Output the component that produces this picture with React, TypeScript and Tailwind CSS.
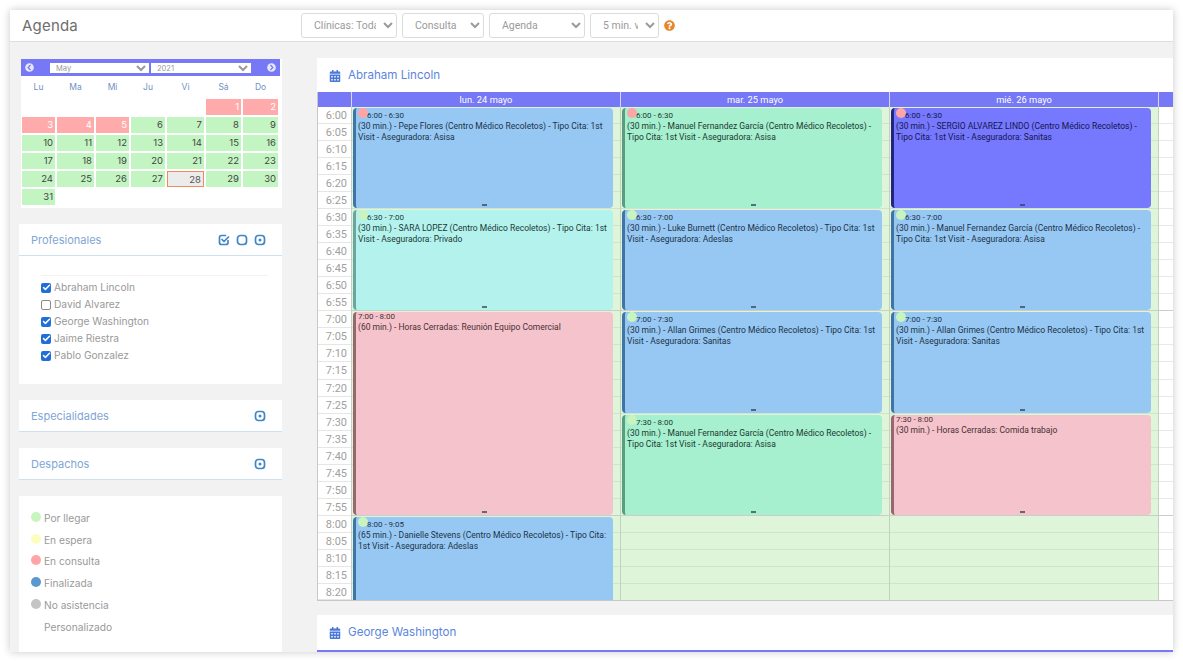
import { Check } from "lucide-react";
import { FaCalendarAlt, FaChevronCircleLeft, FaChevronCircleRight, FaQuestionCircle } from "react-icons/fa";

type Appt = {
  start: number;
  span: number;
  time: string;
  text: string;
  bg: string;
  edge: string;
  ink: string;
  dot?: string;
  open?: boolean;
};

const blue = { bg: "bg-[#97c8f4]", edge: "border-l-[#3f74a6]", ink: "text-[#1b3347]" };
const green = { bg: "bg-[#a6efcf]", edge: "border-l-[#5a9c80]", ink: "text-[#1b3a30]" };
const teal = { bg: "bg-[#b4f3ed]", edge: "border-l-[#6aa5a0]", ink: "text-[#1b3a38]" };
const purple = { bg: "bg-[#7678fe]", edge: "border-l-[#23247f]", ink: "text-[#14164f]" };
const pink = { bg: "bg-[#f4c3cb]", edge: "border-l-[#96676f]", ink: "text-[#4a2f34]" };

const RED = "bg-[#ffa5a5]";
const LIME = "bg-[#c8f4c0]";

const days: { title: string; appts: Appt[] }[] = [
  {
    title: "lun. 24 mayo",
    appts: [
      { start: 1, span: 6, time: "6:00 - 6:30", text: "(30 min.) - Pepe Flores (Centro Médico Recoletos) - Tipo Cita: 1st Visit - Aseguradora: Asisa", dot: RED, ...blue },
      { start: 7, span: 6, time: "6:30 - 7:00", text: "(30 min.) - SARA LOPEZ (Centro Médico Recoletos) - Tipo Cita: 1st Visit - Aseguradora: Privado", dot: LIME, ...teal },
      { start: 13, span: 12, time: "7:00 - 8:00", text: "(60 min.) - Horas Cerradas: Reunión Equipo Comercial", ...pink },
      { start: 25, span: 5, time: "8:00 - 9:05", text: "(65 min.) - Danielle Stevens (Centro Médico Recoletos) - Tipo Cita: 1st Visit - Aseguradora: Adeslas", dot: LIME, open: true, ...blue },
    ],
  },
  {
    title: "mar. 25 mayo",
    appts: [
      { start: 1, span: 6, time: "6:00 - 6:30", text: "(30 min.) - Manuel Fernandez García (Centro Médico Recoletos) - Tipo Cita: 1st Visit - Aseguradora: Asisa", dot: RED, ...green },
      { start: 7, span: 6, time: "6:30 - 7:00", text: "(30 min.) - Luke Burnett (Centro Médico Recoletos) - Tipo Cita: 1st Visit - Aseguradora: Adeslas", dot: LIME, ...blue },
      { start: 13, span: 6, time: "7:00 - 7:30", text: "(30 min.) - Allan Grimes (Centro Médico Recoletos) - Tipo Cita: 1st Visit - Aseguradora: Sanitas", dot: LIME, ...blue },
      { start: 19, span: 6, time: "7:30 - 8:00", text: "(30 min.) - Manuel Fernandez García (Centro Médico Recoletos) - Tipo Cita: 1st Visit - Aseguradora: Asisa", dot: LIME, ...green },
    ],
  },
  {
    title: "mié. 26 mayo",
    appts: [
      { start: 1, span: 6, time: "6:00 - 6:30", text: "(30 min.) - SERGIO ALVAREZ LINDO (Centro Médico Recoletos) - Tipo Cita: 1st Visit - Aseguradora: Sanitas", dot: RED, ...purple },
      { start: 7, span: 6, time: "6:30 - 7:00", text: "(30 min.) - Manuel Fernandez García (Centro Médico Recoletos) - Tipo Cita: 1st Visit - Aseguradora: Asisa", dot: LIME, ...blue },
      { start: 13, span: 6, time: "7:00 - 7:30", text: "(30 min.) - Allan Grimes (Centro Médico Recoletos) - Tipo Cita: 1st Visit - Aseguradora: Sanitas", dot: LIME, ...blue },
      { start: 19, span: 6, time: "7:30 - 8:00", text: "(30 min.) - Horas Cerradas: Comida trabajo", ...pink },
    ],
  },
];

const times: string[] = [];
for (let h = 6; h <= 8; h++) {
  for (let m = 0; m < 60; m += 5) {
    if (h === 8 && m > 20) break;
    times.push(`${h}:${m === 0 ? "00" : m.toString().padStart(2, "0")}`);
  }
}

const weekDays = ["Lu", "Ma", "Mi", "Ju", "Vi", "Sá", "Do"];
const closed = [1, 2, 3, 4, 5];

const Slots = ({ tint }: { tint: boolean }) => (
  <>
    {times.map((t, i) => (
      <div
        key={t}
        style={{ gridRow: i + 1, gridColumn: 1 }}
        className={
          (tint ? "bg-[#dff5d9] " : "bg-white ") +
          (i === 11 || i === 23
            ? "border-b border-b-[#c9cfc7]"
            : i === 28
            ? ""
            : tint
            ? "border-b border-b-[#d0e3cb]"
            : "border-b border-b-[#e8e8e8]")
        }
      />
    ))}
  </>
);

const Event = ({ a }: { a: Appt }) => (
  <div
    style={{ gridRow: `${a.start} / span ${a.span}`, gridColumn: 1 }}
    className={`z-10 ml-[1px] mr-[7px] mt-[1px] flex flex-col overflow-hidden border-l-[3px] pl-[2px] pr-[6px] ${a.open ? "rounded-t-[4px]" : "mb-[1px] rounded-[4px]"} ${a.bg} ${a.edge} ${a.ink}`}
  >
    {a.dot ? (
      <div className="flex h-[13px]">
        <span className={`h-[10px] w-[10px] shrink-0 rounded-full ${a.dot}`} />
        <span className="ml-[-1px] pt-[3px] text-[8px] leading-[10px]">{a.time}</span>
      </div>
    ) : (
      <div className="h-[10px] text-[8px] leading-[10px]">{a.time}</div>
    )}
    <div className="text-[8.5px] leading-[11px]">{a.text}</div>
    {!a.open && <span className="mb-[2px] ml-[3px] mt-auto h-[2px] w-[5px] self-center bg-[#2c3e50]/70" />}
  </div>
);

const Title = ({ name }: { name: string }) => (
  <div className="flex h-[34px] items-center gap-[7px] pl-[12px] pt-[2px] font-['Inter',sans-serif]">
    <FaCalendarAlt className="text-[12px] text-[#4a78d8]" />
    <span className="text-[11.6px] text-[#5b86dc]">{name}</span>
  </div>
);

const Agenda = () => (
  <div className="bg-white">
    <Title name="Abraham Lincoln" />
    <div className="grid grid-cols-[33px_269px_269px_269px_15px] border-b border-l border-[#c8c8c8] font-['Roboto',sans-serif]">
      <div className="h-[15px] bg-[#7678f5]" />
      {days.map((d) => (
        <div key={d.title} className="h-[15px] border-l border-[#d7d7f5] bg-[#7678f5] text-center text-[9.3px] leading-[15px] text-white">
          {d.title}
        </div>
      ))}
      <div className="h-[15px] border-l border-[#d7d7f5] bg-[#7678f5]" />

      <div className="grid grid-rows-[repeat(28,17.04px)_16px]">
        {times.map((t) => (
          <div key={t} className="border-b border-[#e6e6e6] pr-[4px] text-right text-[11px] leading-[17px] text-[#a0a0a0]">
            {t}
          </div>
        ))}
      </div>
      {days.map((d) => (
        <div key={d.title} className="grid grid-cols-1 grid-rows-[repeat(28,17.04px)_16px] border-l border-[#c3cfbf]">
          <Slots tint />
          {d.appts.map((a) => (
            <Event key={a.time} a={a} />
          ))}
        </div>
      ))}
      <div className="grid grid-cols-1 grid-rows-[repeat(28,17.04px)_16px] border-l border-[#c3cfbf]">
        <Slots tint={false} />
      </div>
    </div>
  </div>
);

const CheckIcon = () => (
  <svg width="12" height="12" viewBox="0 0 24 24" fill="none" stroke="currentColor" strokeWidth="3.4" strokeLinecap="round" strokeLinejoin="round">
    <path d="M20 13v4a4 4 0 0 1-4 4H7a4 4 0 0 1-4-4V7a4 4 0 0 1 4-4h8" />
    <path d="M8 11l4 4 9-9" />
  </svg>
);

const BoxIcon = () => (
  <svg width="12" height="12" viewBox="0 0 24 24" fill="none" stroke="currentColor" strokeWidth="3.4">
    <rect x="3" y="3" width="18" height="18" rx="6" />
  </svg>
);

const DotIcon = () => (
  <svg width="12" height="12" viewBox="0 0 24 24" fill="none" stroke="currentColor" strokeWidth="3.4">
    <rect x="3" y="3" width="18" height="18" rx="6" />
    <circle cx="12" cy="12" r="3" fill="currentColor" stroke="none" />
  </svg>
);

const SectionHead = ({ title, all }: { title: string; all?: boolean }) => (
  <div className="flex h-[32px] items-center justify-between border-b border-[#cfe0ef] bg-white pl-[12px] pr-[16px]">
    <span className="text-[11px] text-[#7fa6d6]">{title}</span>
    <div className="flex items-center gap-[6px] text-[#3f86c6]">
      {all && <CheckIcon />}
      {all && <BoxIcon />}
      <DotIcon />
    </div>
  </div>
);

const people = [
  { name: "Abraham Lincoln", on: true },
  { name: "David Alvarez", on: false },
  { name: "George Washington", on: true },
  { name: "Jaime Riestra", on: true },
  { name: "Pablo Gonzalez", on: true },
];

const legend = [
  { label: "Por llegar", c: "bg-[#c8f4c0]" },
  { label: "En espera", c: "bg-[#fdfdc0]" },
  { label: "En consulta", c: "bg-[#ffa5a5]" },
  { label: "Finalizada", c: "bg-[#5b98cf]" },
  { label: "No asistencia", c: "bg-[#c4c4c4]" },
  { label: "Personalizado", c: "" },
];

const MiniCalendar = () => {
  const cells: (number | null)[] = [null, null, null, null, null];
  for (let d = 1; d <= 31; d++) cells.push(d);
  return (
    <div className="ml-[2px] w-[261px] bg-white pb-[3px]">
      <div className="mr-[2px] flex h-[17px] items-center justify-between bg-[#7678f5] px-[4px]">
        <FaChevronCircleLeft className="text-[9px] text-[#e6e8ff]" />
        <div className="flex gap-[2px]">
          <select className="h-[10px] w-[99px] bg-white pl-[2px] text-[7.5px] text-[#999]">
            <option>May</option>
          </select>
          <select className="h-[10px] w-[100px] bg-white pl-[2px] text-[7.5px] text-[#999]">
            <option>2021</option>
          </select>
        </div>
        <FaChevronCircleRight className="text-[9px] text-[#e6e8ff]" />
      </div>
      <div className="grid grid-cols-[33px_37px_33px_34px_37px_35px_35px] gap-x-[2px] pl-[1px]">
        {weekDays.map((w) => (
          <div key={w} className="h-[23px] text-center text-[8.5px] leading-[23px] text-[#6f8fc4]">
            {w}
          </div>
        ))}
      </div>
      <div className="grid auto-rows-[16px] grid-cols-[33px_37px_33px_34px_37px_35px_35px] gap-x-[2px] gap-y-[2.1px] pl-[1px]">
        {cells.map((d, i) =>
          d === null ? (
            <div key={`e${i}`} />
          ) : (
            <div
              key={d}
              className={
                "pr-[2px] text-right text-[9.5px] leading-[16px] " +
                (closed.includes(d)
                  ? "bg-[#ffabab] text-white"
                  : d === 28
                  ? "border-[1.5px] border-[#ef8a5c] bg-[#ececec] leading-[13px] text-[#555]"
                  : "bg-[#c3f5c3] text-[#444]")
              }
            >
              {d}
            </div>
          )
        )}
      </div>
    </div>
  );
};

const Dropdown = ({ label, w }: { label: string; w: string }) => (
  <select className={`h-[25px] rounded-[3px] border border-[#dcdcdc] bg-white pl-[8px] pr-[4px] text-[10.5px] text-[#9b9b9b] ${w}`}>
    <option>{label}</option>
  </select>
);

export default function App() {
  return (
    <div className="h-[662px] w-[1183px] overflow-hidden bg-white p-[10px] font-['Inter',sans-serif]">
      <div className="flex h-[642px] w-[1163px] flex-col overflow-hidden bg-[#f2f2f2] shadow-[0_0_8px_rgba(0,0,0,0.22)]">
        <header className="flex h-[32px] shrink-0 items-center border-b border-[#dedede] bg-white">
          <h1 className="w-[291px] pl-[12px] pt-[2px] text-[15px] tracking-[0.2px] text-[#6e6e6e]">Agenda</h1>
          <div className="flex items-center gap-[5px] font-['Roboto',sans-serif]">
            <Dropdown label="Clínicas: Todas" w="w-[96px]" />
            <Dropdown label="Consulta" w="w-[82px]" />
            <Dropdown label="Agenda" w="w-[96px]" />
            <Dropdown label="5 min. vista" w="w-[69px]" />
            <FaQuestionCircle className="text-[11px] text-[#e8862a]" />
          </div>
        </header>

        <div className="flex min-h-0 flex-1">
          <aside className="w-[307px] shrink-0 pl-[9px] pr-[35px] pt-[17px]">
            <MiniCalendar />
            <div className="mt-[16px] w-[263px] bg-white">
              <SectionHead title="Profesionales" all />
              <div className="h-[128px] pl-[22px] pr-[14px] pt-[19px]">
                <div className="border-t border-[#f3f3f3] pt-[3px]">
                  {people.map((p) => (
                    <div key={p.name} className="flex h-[17px] items-center gap-[3px] text-[10.2px] text-[#999]">
                      {p.on ? (
                        <span className="flex h-[10px] w-[10px] items-center justify-center rounded-[2px] bg-[#1f6fd6] text-white">
                          <Check size={9} strokeWidth={4} />
                        </span>
                      ) : (
                        <span className="h-[10px] w-[10px] rounded-[2px] border border-[#8a8a8a] bg-white" />
                      )}
                      {p.name}
                    </div>
                  ))}
                </div>
              </div>
            </div>
            <div className="mt-[16px] w-[263px]">
              <SectionHead title="Especialidades" />
            </div>
            <div className="mt-[16px] w-[263px]">
              <SectionHead title="Despachos" />
            </div>
            <div className="mt-[16px] h-[160px] w-[263px] bg-white pl-[12px] pt-[11px]">
              {legend.map((l) => (
                <div key={l.label} className="flex h-[21.8px] items-center gap-[3px] text-[10.2px] text-[#999]">
                  <span className={`mb-[3px] h-[10px] w-[10px] rounded-full ${l.c}`} />
                  {l.label}
                </div>
              ))}
            </div>
          </aside>

          <main className="min-w-0 flex-1 overflow-hidden pt-[16px]">
            <Agenda />
            <div className="mt-[14px] flex h-[37px] flex-col justify-between bg-white">
              <Title name="George Washington" />
              <div className="h-[2px] bg-[#7678f5]" />
            </div>
          </main>
        </div>
      </div>
    </div>
  );
}
